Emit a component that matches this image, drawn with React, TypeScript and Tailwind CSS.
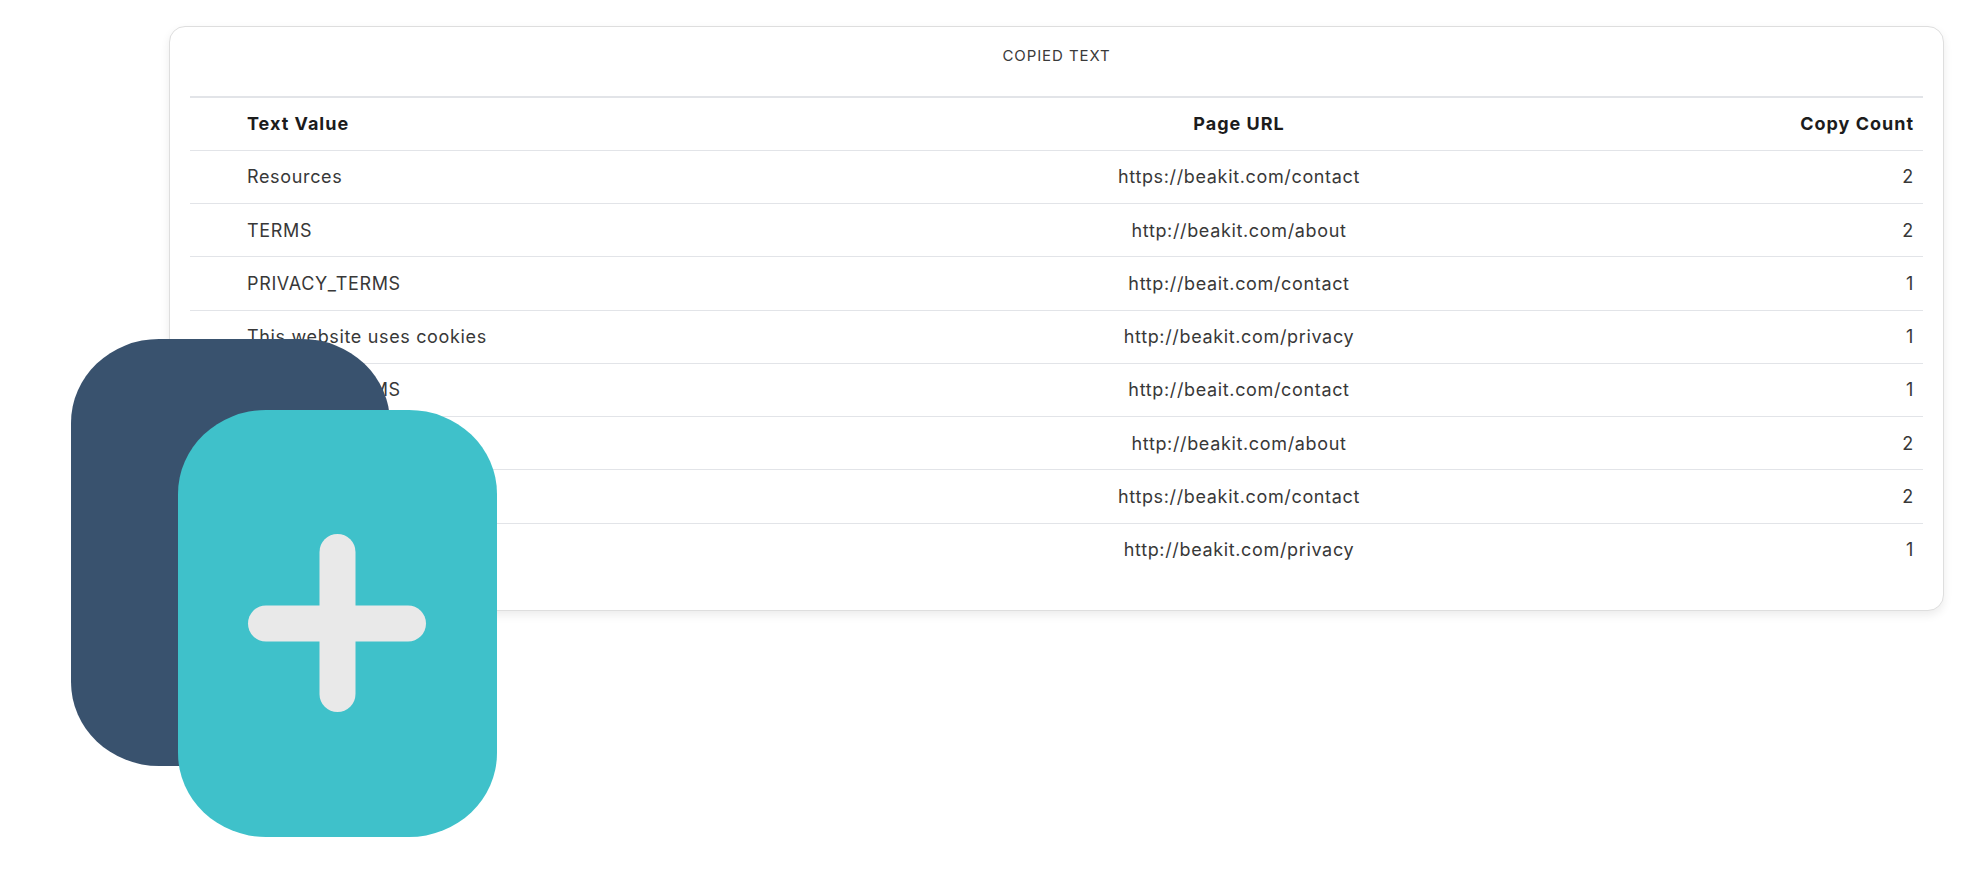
const ROWS = [
  ["Resources", "https://beakit.com/contact", "2"],
  ["TERMS", "http://beakit.com/about", "2"],
  ["PRIVACY_TERMS", "http://beait.com/contact", "1"],
  ["This website uses cookies", "http://beakit.com/privacy", "1"],
  ["PRIVACY_TERMS", "http://beait.com/contact", "1"],
  ["TERMS", "http://beakit.com/about", "2"],
  ["Resources", "https://beakit.com/contact", "2"],
  ["This website uses cookies", "http://beakit.com/privacy", "1"],
];

function FloatingIcon() {
  return (
    <svg className="absolute left-[71px] top-[339px]" width="426" height="498" viewBox="0 0 426 498">
      <rect x="0" y="0" width="319" height="427" rx="88" ry="84" fill="#39526e" />
      <rect x="107" y="71" width="319" height="427" rx="88" ry="84" fill="#3fc1ca" />
      <rect x="177" y="266.5" width="178" height="36" rx="18" fill="#e9e9e9" />
      <rect x="248.5" y="195" width="36" height="178" rx="18" fill="#e9e9e9" />
    </svg>
  );
}

export default function App() {
  return (
    <div className="relative h-[872px] w-full overflow-hidden bg-white font-['Inter',sans-serif] text-[#383838]">
      <div className="pl-[169px] pr-[25px] pt-[26px]">
        <div className="h-[585px] rounded-2xl border border-[#dedede] bg-white px-5 shadow-[0_4px_10px_rgba(0,0,0,0.08)]">
          <div className="flex h-[69px] items-center justify-center pb-[11px] text-[15px] tracking-[0.9px] text-[#3a3a3a]">COPIED TEXT</div>
          <table className="w-full table-fixed border-collapse text-[18px] tracking-[0.65px]">
            <colgroup>
              <col className="w-[700px]" />
              <col className="w-[698px]" />
              <col />
            </colgroup>
            <thead>
              <tr className="h-[53.25px] border-y border-t-2 border-[#e2e4e8] text-[#1c1c1c]">
                <th className="pl-[57px] text-left font-bold tracking-[1px]">Text Value</th>
                <th className="text-center font-bold tracking-[1px]">Page URL</th>
                <th className="pr-[9px] text-right font-bold tracking-[1px]">Copy Count</th>
              </tr>
            </thead>
            <tbody>
              {ROWS.map((row, i) => (
                <tr key={i} className={i < ROWS.length - 1 ? "h-[53.25px] border-b border-[#e2e4e8]" : "h-[53.25px]"}>
                  <td className="pl-[57px]">{row[0]}</td>
                  <td className="text-center">{row[1]}</td>
                  <td className="pr-[9px] text-right">{row[2]}</td>
                </tr>
              ))}
            </tbody>
          </table>
        </div>
      </div>
      <FloatingIcon />
    </div>
  );
}
